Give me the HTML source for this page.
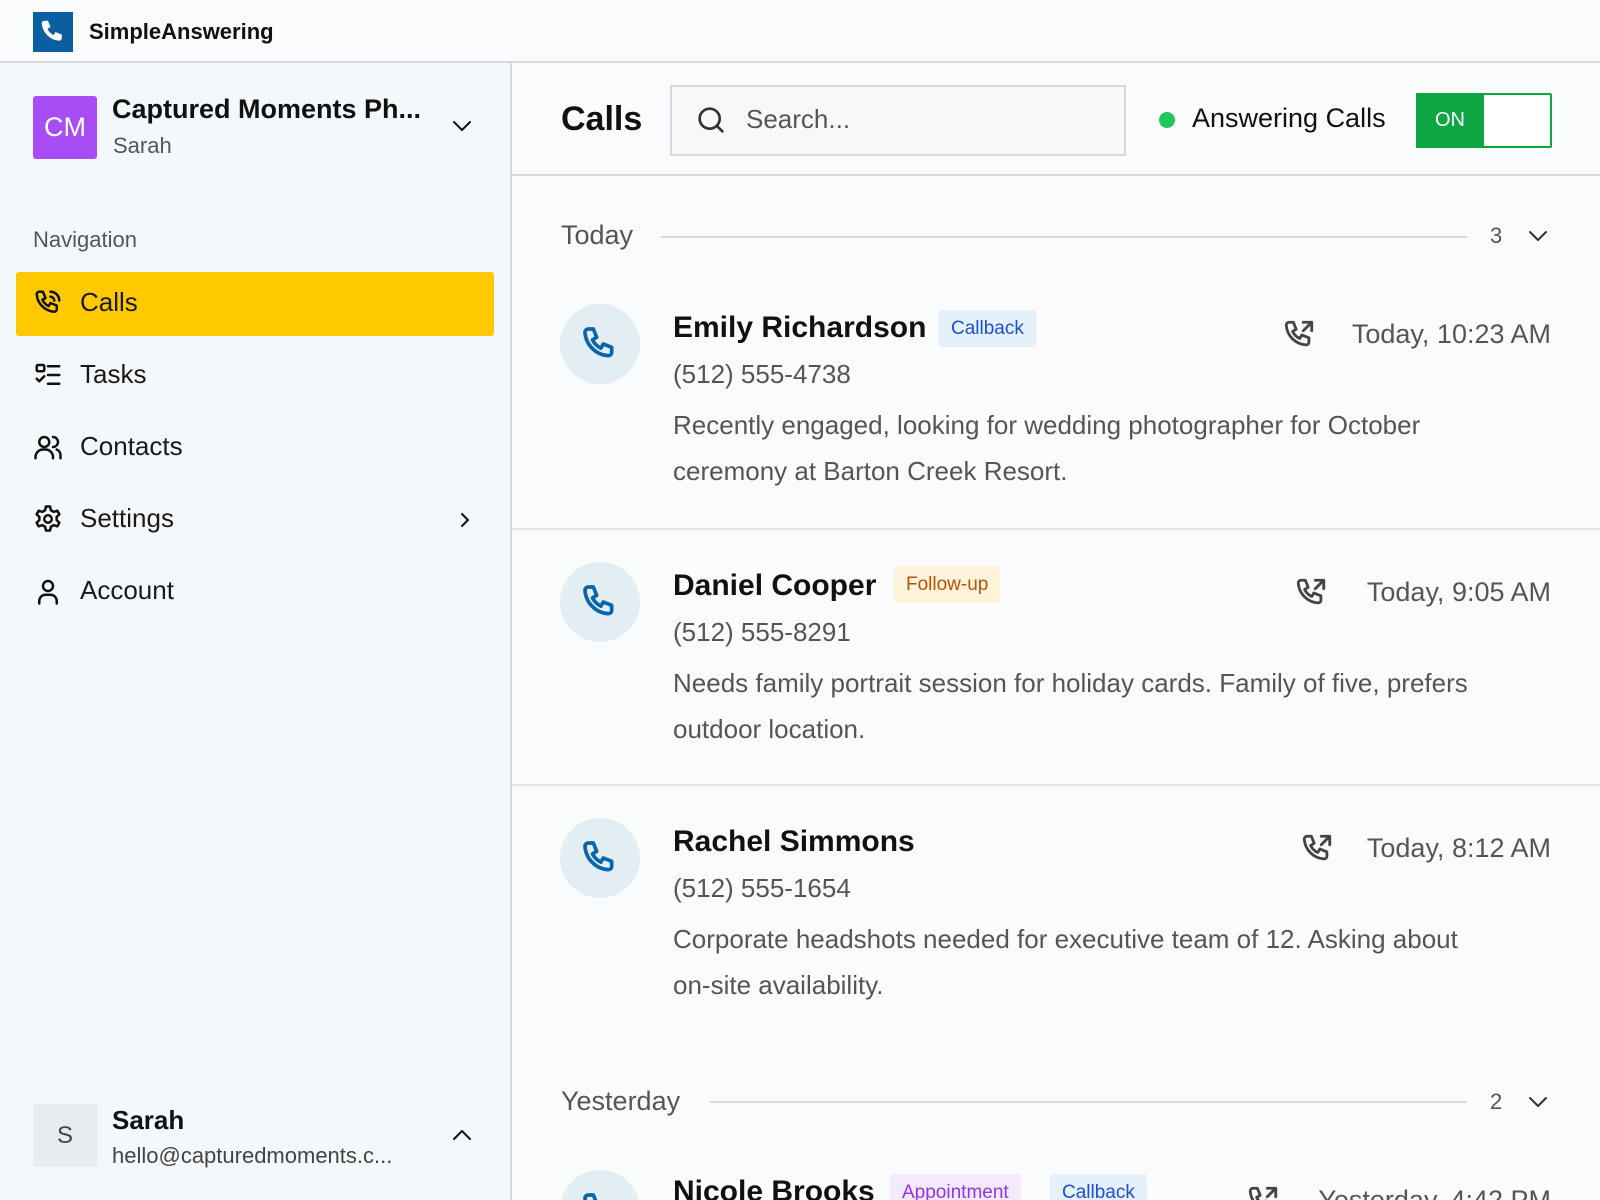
<!DOCTYPE html>
<html><head><meta charset="utf-8"><style>
*{box-sizing:border-box;margin:0;padding:0}
html,body{width:1600px;height:1200px;overflow:hidden}
body{background:#fafbfd;font-family:"Liberation Sans",sans-serif;color:#111}
#w{position:relative;width:1600px;height:1200px;overflow:hidden}
.a{position:absolute;white-space:nowrap}
.top{left:0;top:0;width:1600px;height:63px;background:#fafbfd;border-bottom:2px solid #d6d9de}
.side{left:0;top:63px;width:512px;height:1137px;background:#f5f8fb;border-right:2px solid #d6d9de}
.nav{font-size:26px;color:#1a1a1a}
.ic{position:absolute;stroke:#111;fill:none;stroke-width:2;stroke-linecap:round;stroke-linejoin:round}
.circ{width:80px;height:80px;border-radius:50%;background:#e2edf4}
.name{font-size:30px;font-weight:bold;color:#111}
.phone{font-size:26px;color:#555}
.desc{font-size:26px;color:#555;line-height:46px;white-space:normal;width:830px}
.time{font-size:27px;color:#555;text-align:right}
.badge{font-size:19px;padding:0 12px;height:37px;line-height:37px;border-radius:3px}
.sep{height:2px;background:#e1e4e8}
</style></head><body><div id="w">
<div class="a top"></div>
<div class="a" style="left:33px;top:12px;width:40px;height:40px;background:#0a5fa0"></div>
<svg class="a" style="left:38px;top:17px" width="30" height="30" viewBox="0 0 24 24"><path d="M5 3h3l2 5-2.5 1.5a11 11 0 0 0 5 5L14 12l5 2v3a2 2 0 0 1-2 2A15 15 0 0 1 3 5a2 2 0 0 1 2-2z" fill="#fff"/></svg>
<div class="a" style="left:89px;top:19px;font-size:22px;font-weight:bold">SimpleAnswering</div>

<div class="a side"></div>
<div class="a" style="left:33px;top:96px;width:64px;height:63px;background:#a84df5;border-radius:3px;color:#fff;font-size:27px;line-height:63px;text-align:center">CM</div>
<div class="a" style="left:112px;top:94px;font-size:27px;font-weight:bold">Captured Moments Ph...</div>
<div class="a" style="left:113px;top:133px;font-size:22px;color:#555">Sarah</div>
<svg class="ic" style="left:450px;top:117px" width="24" height="18" viewBox="0 0 24 18"><path d="M4 5l8 8 8-8"/></svg>
<div class="a" style="left:33px;top:227px;font-size:22px;color:#555">Navigation</div>
<div class="a" style="left:16px;top:272px;width:478px;height:64px;background:#ffc900;border-radius:3px"></div>
<svg class="ic" style="left:33px;top:288px" width="30" height="30" viewBox="0 0 24 24"><path d="M5 3h3l2 5-2.5 1.5a11 11 0 0 0 5 5L14 12l5 2v3a2 2 0 0 1-2 2A15 15 0 0 1 3 5a2 2 0 0 1 2-2z"/><path d="M14 3a7 7 0 0 1 7 7M14 7a3 3 0 0 1 3 3"/></svg>
<div class="a nav" style="left:80px;top:287px">Calls</div>
<svg class="ic" style="left:33px;top:360px" width="30" height="30" viewBox="0 0 24 24"><rect x="3" y="4" width="6" height="5" rx="1"/><path d="M3 15l2 2 4-4M12 5h9M12 12h9M12 19h9"/></svg>
<div class="a nav" style="left:80px;top:359px">Tasks</div>
<svg class="ic" style="left:33px;top:432px" width="30" height="30" viewBox="0 0 24 24"><circle cx="9" cy="8" r="4"/><path d="M2 21v-1a6 6 0 0 1 6-6h2a6 6 0 0 1 6 6v1M16 4a4 4 0 0 1 0 8M19 14a5 5 0 0 1 3 5v2"/></svg>
<div class="a nav" style="left:80px;top:431px">Contacts</div>
<svg class="ic" style="left:33px;top:504px" width="30" height="30" viewBox="0 0 24 24"><circle cx="12" cy="12" r="3"/><path d="M10.3 2h3.4l.6 3 2.3 1.3 2.8-1 1.7 3-2.2 2v2.6l2.2 2-1.7 3-2.8-1-2.3 1.3-.6 3h-3.4l-.6-3-2.3-1.3-2.8 1-1.7-3 2.2-2v-2.6l-2.2-2 1.7-3 2.8 1L9.7 5z"/></svg>
<div class="a nav" style="left:80px;top:503px">Settings</div>
<svg class="ic" style="left:458px;top:510px" width="14" height="20" viewBox="0 0 14 20"><path d="M4 4l6 6-6 6"/></svg>
<svg class="ic" style="left:33px;top:576px" width="30" height="30" viewBox="0 0 24 24"><circle cx="12" cy="8" r="4"/><path d="M5 22v-2a5 5 0 0 1 5-5h4a5 5 0 0 1 5 5v2"/></svg>
<div class="a nav" style="left:80px;top:575px">Account</div>

<div class="a" style="left:33px;top:1104px;width:64px;height:63px;background:#e9ecef;color:#444;font-size:24px;line-height:63px;text-align:center">S</div>
<div class="a" style="left:112px;top:1105px;font-size:26px;font-weight:bold">Sarah</div>
<div class="a" style="left:112px;top:1143px;font-size:22px;color:#444">hello@capturedmoments.c...</div>
<svg class="ic" style="left:450px;top:1126px" width="24" height="18" viewBox="0 0 24 18"><path d="M4 13l8-8 8 8"/></svg>

<div class="a" style="left:561px;top:100px;font-size:34px;font-weight:bold">Calls</div>
<div class="a" style="left:670px;top:85px;width:456px;height:71px;border:2px solid #d6d9de;background:#f7f8fa"></div>
<svg class="ic" style="left:695px;top:104px;stroke:#333" width="32" height="32" viewBox="0 0 24 24"><circle cx="11" cy="11" r="7.5"/><path d="M16.5 16.5l4 4"/></svg>
<div class="a" style="left:746px;top:104px;font-size:26px;color:#555">Search...</div>
<div class="a" style="left:1159px;top:112px;width:16px;height:16px;border-radius:50%;background:#22c55e"></div>
<div class="a" style="left:1192px;top:103px;font-size:27px">Answering Calls</div>
<div class="a" style="left:1416px;top:93px;width:136px;height:55px;border:2px solid #0ea543;background:#fff;border-radius:2px"></div>
<div class="a" style="left:1416px;top:93px;width:68px;height:55px;background:#0ea543;color:#fff;font-size:20px;line-height:55px;text-align:center">ON</div>
<div class="a sep" style="left:512px;top:174px;width:1088px;background:#d6d9de"></div>

<div class="a" style="left:561px;top:220px;font-size:27px;color:#555">Today</div>
<div class="a" style="left:661px;top:236px;width:806px;height:2px;background:#d6d9de"></div>
<div class="a" style="left:1490px;top:223px;font-size:22px;color:#555">3</div>
<svg class="ic" style="left:1526px;top:227px;stroke:#333" width="24" height="18" viewBox="0 0 24 18"><path d="M4 5l8 8 8-8"/></svg>

<div class="a circ" style="left:560px;top:304px"></div>
<svg class="ic" style="left:580px;top:324px;stroke:#0a66a8;stroke-width:2.2" width="40" height="40" viewBox="0 0 24 24"><path d="M5 3h3l2 5-2.5 1.5a11 11 0 0 0 5 5L14 12l5 2v3a2 2 0 0 1-2 2A15 15 0 0 1 3 5a2 2 0 0 1 2-2z"/></svg>
<div class="a name" style="left:673px;top:311px">Emily Richardson</div>
<div class="a badge" style="left:939px;top:310px;background:#e6f0fb;color:#1d4ed8">Callback</div>
<svg class="ic" style="left:1282px;top:318px;stroke:#444" width="34" height="34" viewBox="0 0 24 24"><path d="M5 3h3l2 5-2.5 1.5a11 11 0 0 0 5 5L14 12l5 2v3a2 2 0 0 1-2 2A15 15 0 0 1 3 5a2 2 0 0 1 2-2z"/><path d="M15 3h6v6M21 3l-6 6"/></svg>
<div class="a time" style="right:49px;top:319px">Today, 10:23 AM</div>
<div class="a phone" style="left:673px;top:359px">(512) 555-4738</div>
<div class="a desc" style="left:673px;top:402px">Recently engaged, looking for wedding photographer for October ceremony at Barton Creek Resort.</div>
<div class="a sep" style="left:512px;top:528px;width:1088px"></div>

<div class="a circ" style="left:560px;top:562px"></div>
<svg class="ic" style="left:580px;top:582px;stroke:#0a66a8;stroke-width:2.2" width="40" height="40" viewBox="0 0 24 24"><path d="M5 3h3l2 5-2.5 1.5a11 11 0 0 0 5 5L14 12l5 2v3a2 2 0 0 1-2 2A15 15 0 0 1 3 5a2 2 0 0 1 2-2z"/></svg>
<div class="a name" style="left:673px;top:569px">Daniel Cooper</div>
<div class="a badge" style="left:894px;top:566px;background:#fdf3d9;color:#b45309">Follow-up</div>
<svg class="ic" style="left:1294px;top:576px;stroke:#444" width="34" height="34" viewBox="0 0 24 24"><path d="M5 3h3l2 5-2.5 1.5a11 11 0 0 0 5 5L14 12l5 2v3a2 2 0 0 1-2 2A15 15 0 0 1 3 5a2 2 0 0 1 2-2z"/><path d="M15 3h6v6M21 3l-6 6"/></svg>
<div class="a time" style="right:49px;top:577px">Today, 9:05 AM</div>
<div class="a phone" style="left:673px;top:617px">(512) 555-8291</div>
<div class="a desc" style="left:673px;top:660px;width:880px">Needs family portrait session for holiday cards. Family of five, prefers outdoor location.</div>
<div class="a sep" style="left:512px;top:784px;width:1088px"></div>

<div class="a circ" style="left:560px;top:818px"></div>
<svg class="ic" style="left:580px;top:838px;stroke:#0a66a8;stroke-width:2.2" width="40" height="40" viewBox="0 0 24 24"><path d="M5 3h3l2 5-2.5 1.5a11 11 0 0 0 5 5L14 12l5 2v3a2 2 0 0 1-2 2A15 15 0 0 1 3 5a2 2 0 0 1 2-2z"/></svg>
<div class="a name" style="left:673px;top:825px">Rachel Simmons</div>
<svg class="ic" style="left:1300px;top:832px;stroke:#444" width="34" height="34" viewBox="0 0 24 24"><path d="M5 3h3l2 5-2.5 1.5a11 11 0 0 0 5 5L14 12l5 2v3a2 2 0 0 1-2 2A15 15 0 0 1 3 5a2 2 0 0 1 2-2z"/><path d="M15 3h6v6M21 3l-6 6"/></svg>
<div class="a time" style="right:49px;top:833px">Today, 8:12 AM</div>
<div class="a phone" style="left:673px;top:873px">(512) 555-1654</div>
<div class="a desc" style="left:673px;top:916px;width:830px">Corporate headshots needed for executive team of 12. Asking about on&#8209;site availability.</div>

<div class="a" style="left:561px;top:1086px;font-size:27px;color:#555">Yesterday</div>
<div class="a" style="left:710px;top:1101px;width:757px;height:2px;background:#d6d9de"></div>
<div class="a" style="left:1490px;top:1089px;font-size:22px;color:#555">2</div>
<svg class="ic" style="left:1526px;top:1093px;stroke:#333" width="24" height="18" viewBox="0 0 24 18"><path d="M4 5l8 8 8-8"/></svg>

<div class="a circ" style="left:560px;top:1170px"></div>
<svg class="ic" style="left:580px;top:1190px;stroke:#0a66a8;stroke-width:2.2" width="40" height="40" viewBox="0 0 24 24"><path d="M5 3h3l2 5-2.5 1.5a11 11 0 0 0 5 5L14 12l5 2v3a2 2 0 0 1-2 2A15 15 0 0 1 3 5a2 2 0 0 1 2-2z"/></svg>
<div class="a name" style="left:673px;top:1175px">Nicole Brooks</div>
<div class="a badge" style="left:890px;top:1174px;background:#f3eafd;color:#9333ea">Appointment</div>
<div class="a badge" style="left:1050px;top:1174px;background:#e6f0fb;color:#1d4ed8">Callback</div>
<svg class="ic" style="left:1246px;top:1184px;stroke:#444" width="34" height="34" viewBox="0 0 24 24"><path d="M5 3h3l2 5-2.5 1.5a11 11 0 0 0 5 5L14 12l5 2v3a2 2 0 0 1-2 2A15 15 0 0 1 3 5a2 2 0 0 1 2-2z"/><path d="M15 3h6v6M21 3l-6 6"/></svg>
<div class="a time" style="right:49px;top:1185px">Yesterday, 4:42 PM</div>
</div></body></html>
